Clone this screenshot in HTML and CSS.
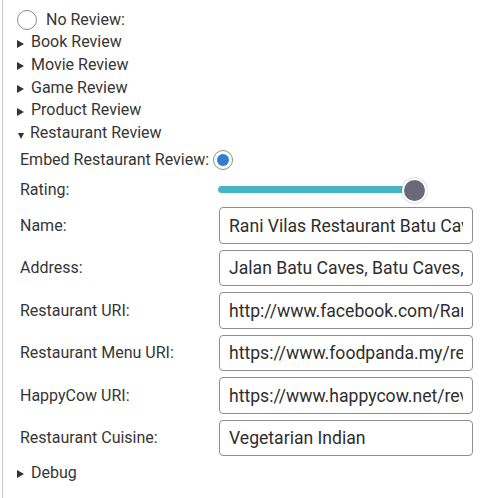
FILE: index.html
```html
<!DOCTYPE html>
<html>
<head>
<meta charset="utf-8">
<link rel="stylesheet" href="styles.css">
</head>
<body>
<div class="panel">
  <label class="radio-row">
    <span class="radio"></span>
    <span>No Review:</span>
  </label>
  <div class="summary closed">Book Review</div>
  <div class="summary closed">Movie Review</div>
  <div class="summary closed">Game Review</div>
  <div class="summary closed">Product Review</div>
  <div class="summary open">Restaurant Review</div>
  <div class="section">
    <div class="embed-row">
      <span>Embed Restaurant Review:</span>
      <span class="radio checked"></span>
    </div>
    <div class="rating-row">
      <span class="label">Rating:</span>
      <div class="slider">
        <div class="track"></div>
        <div class="thumb"></div>
      </div>
    </div>
    <div class="field">
      <span class="label">Name:</span>
      <input class="input" type="text" value="Rani Vilas Restaurant Batu Caves">
    </div>
    <div class="field">
      <span class="label">Address:</span>
      <input class="input" type="text" value="Jalan Batu Caves, Batu Caves, Selangor">
    </div>
    <div class="field">
      <span class="label">Restaurant URI:</span>
      <input class="input" type="text" value="http://www.facebook.com/RaniVilas">
    </div>
    <div class="field">
      <span class="label">Restaurant Menu URI:</span>
      <input class="input" type="text" value="https://www.foodpanda.my/restaurant">
    </div>
    <div class="field">
      <span class="label">HappyCow URI:</span>
      <input class="input" type="text" value="https://www.happycow.net/reviews">
    </div>
    <div class="field">
      <span class="label">Restaurant Cuisine:</span>
      <input class="input" type="text" value="Vegetarian Indian">
    </div>
  </div>
  <div class="summary closed debug">Debug</div>
</div>
</body>
</html>
```
FILE: styles.css
```css
html, body {
  margin: 0;
  padding: 0;
  background: #ffffff;
}
body {
  font-family: Roboto, "Liberation Sans", sans-serif;
  font-size: 16px;
  color: #363636;
}
.panel {
  margin-left: 2px;
  border-left: 1px solid #c9c9c9;
  padding-left: 14px;
  padding-top: 9.5px;
  min-height: 488px;
}
.radio-row {
  display: flex;
  align-items: center;
  height: 21.6px;
  line-height: 22.8px;
  gap: 9px;
}
.radio {
  box-sizing: border-box;
  width: 20px;
  height: 20px;
  border: 1px solid #8c8c8c;
  border-radius: 50%;
  background: #fff;
  flex: none;
  position: relative;
}
.radio.checked::after {
  content: "";
  position: absolute;
  left: 3px;
  top: 3px;
  width: 12px;
  height: 12px;
  border-radius: 50%;
  background: #2f7fd1;
}
.summary {
  line-height: 22.8px;
  height: 22.8px;
  display: flex;
  align-items: flex-start;
}
.summary::before {
  content: "";
  display: block;
  width: 0;
  height: 0;
  flex: none;
}
.summary.closed::before {
  margin-top: 8.5px;
  margin-right: 7px;
  border-left: 7px solid #333;
  border-top: 4px solid transparent;
  border-bottom: 4px solid transparent;
}
.summary.open::before {
  margin-top: 10.5px;
  margin-left: 1px;
  margin-right: 6px;
  border-top: 6px solid #333;
  border-left: 3.5px solid transparent;
  border-right: 3.5px solid transparent;
}
.section {
  padding-left: 3px;
}
.embed-row {
  display: flex;
  align-items: center;
  height: 22.8px;
  line-height: 22.8px;
  margin-top: 4px;
  gap: 4px;
}
.rating-row {
  display: flex;
  align-items: flex-start;
  height: 33.1px;
  margin-top: 2.6px;
}
.label {
  width: 199px;
  flex: none;
  line-height: 22.8px;
}
.rating-row .label {
  margin-top: 4.5px;
}
.slider {
  position: relative;
  width: 209px;
  height: 24px;
  margin-top: 3.5px;
  margin-left: -1px;
}
.track {
  position: absolute;
  left: 0;
  right: 12px;
  top: 8.5px;
  height: 7px;
  border-radius: 4px;
  background: #45b6c3;
}
.thumb {
  position: absolute;
  right: 0;
  top: 0;
  box-sizing: border-box;
  width: 25px;
  height: 25px;
  border-radius: 50%;
  background: #6a6977;
  border: 2px solid #fff;
  box-shadow: 0 0 2px rgba(0, 0, 0, 0.35);
}
.field {
  display: flex;
  align-items: center;
  height: 36px;
  margin-bottom: 6.5px;
}
.field .label {
  margin-top: 1px;
}
.input {
  box-sizing: border-box;
  width: 254px;
  height: 36.3px;
  margin: 0;
  padding: 0 9px;
  border: 1px solid #8e8e8e;
  border-radius: 4px;
  font-family: Roboto, "Liberation Sans", sans-serif;
  font-size: 17.6px;
  color: #2e2e2e;
  background: #fff;
  outline: none;
}
.debug {
  margin-top: -1px;
}
```
